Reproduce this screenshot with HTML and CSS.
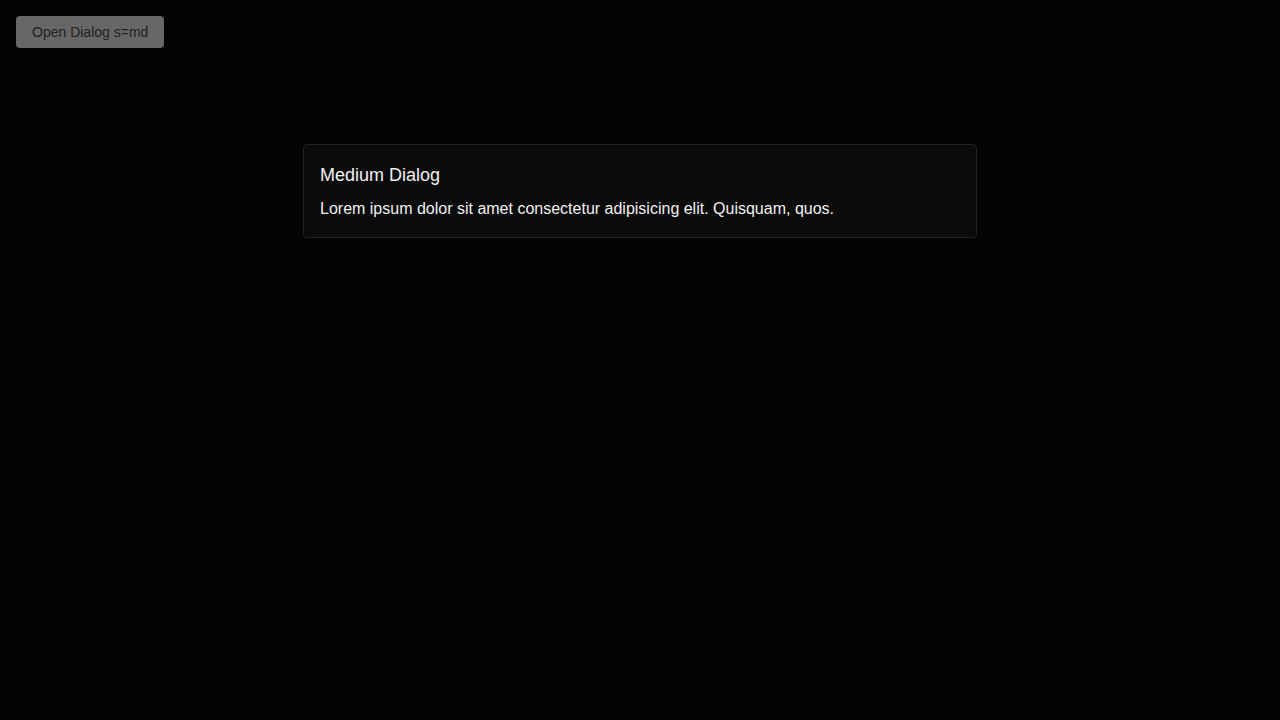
FILE: index.html
```html
<!DOCTYPE html>
<html>
<head>
<meta charset="utf-8">
<link rel="stylesheet" href="styles.css">
</head>
<body>
<div class="page">
  <button class="open-btn">Open Dialog s=md</button>
</div>
<div class="backdrop">
  <div class="dialog" role="dialog">
    <h2 class="dialog-title">Medium Dialog</h2>
    <p class="dialog-body">Lorem ipsum dolor sit amet consectetur adipisicing elit. Quisquam, quos.</p>
  </div>
</div>
</body>
</html>
```
FILE: styles.css
```css
html, body {
  margin: 0;
  padding: 0;
  background: #030303;
  font-family: "Liberation Sans", Arial, sans-serif;
  height: 100%;
}
.page {
  padding: 16px;
}
.open-btn {
  font-family: "Liberation Sans", Arial, sans-serif;
  font-size: 14px;
  height: 32px;
  padding: 0 16px;
  background: #676767;
  color: #222;
  border: none;
  border-radius: 4px;
}
.backdrop {
  position: fixed;
  inset: 0;
  display: flex;
  justify-content: center;
  align-items: flex-start;
  padding-top: 144px;
}
.dialog {
  width: 640px;
  padding: 17px 16px 16px;
  background: #0b0b0b;
  border: 1px solid #222;
  border-radius: 4px;
  color: #f0f0f0;
}
.dialog-title {
  margin: 0 0 8px;
  font-size: 18px;
  font-weight: normal;
  line-height: 27px;
}
.dialog-body {
  margin: 0;
  font-size: 16px;
  line-height: 24px;
}
```
